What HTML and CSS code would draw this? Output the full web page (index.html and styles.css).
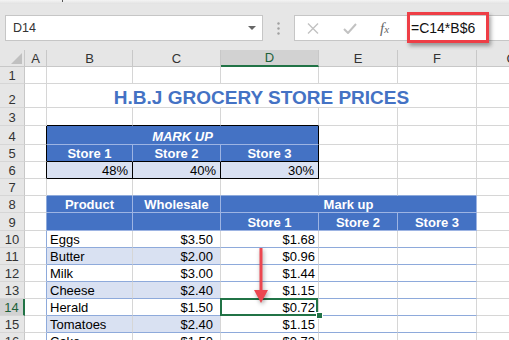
FILE: index.html
```html
<!DOCTYPE html>
<html lang="en">
<head>
  <meta charset="UTF-8">
  <title>H.B.J Grocery Store Prices</title>
  <link rel="stylesheet" href="styles.css">
</head>
<body>
  <!-- Formelleiste -->
  <div class="toolbar">
    <div class="strip"><span class="tick"></span></div>
    <div class="bar">
      <div class="namebox">
        <span>D14</span>
        <span class="caret"></span>
      </div>
      <div class="grip">
        <svg width="3" height="13" viewBox="0 0 3 13"><circle cx="1.5" cy="1.5" r="1.2"/><circle cx="1.5" cy="6.5" r="1.2"/><circle cx="1.5" cy="11.5" r="1.2"/></svg>
      </div>
      <div class="formula">
        <div class="fbtns">
          <svg class="ico-x" width="12" height="11" viewBox="0 0 12 11"><path d="M1 0.5 L11 10.5 M11 0.5 L1 10.5"/></svg>
          <svg class="ico-ok" width="14" height="11" viewBox="0 0 14 11"><path d="M1 6 L5 10 L13 1"/></svg>
          <span class="fx">f<span class="fxx">x</span></span>
        </div>
        <div class="input">
          <div class="highlight">=C14*B$6</div>
        </div>
      </div>
    </div>
  </div>

  <!-- Tabelle -->
  <div class="sheet">
    <div class="corner"><svg width="25" height="17"><polygon points="22,3 22,14 11,14"/></svg></div>
    <div class="ch">A</div><div class="ch">B</div><div class="ch">C</div><div class="ch ch-sel">D</div><div class="ch">E</div><div class="ch">F</div><div class="ch">G</div>

    <div class="rh">1</div>
    <div class="c"></div><div class="c"></div><div class="c"></div><div class="c"></div><div class="c"></div><div class="c"></div><div class="c"></div>

    <div class="rh">2</div>
    <div class="c"></div><div class="c title">H.B.J GROCERY STORE PRICES</div><div class="c"></div>

    <div class="rh">3</div>
    <div class="c"></div><div class="c top-b"></div><div class="c top-b"></div><div class="c top-b"></div><div class="c"></div><div class="c"></div><div class="c"></div>

    <div class="rh">4</div>
    <div class="c edge-b"></div><div class="c mk">MARK UP</div><div class="c"></div><div class="c"></div><div class="c"></div>

    <div class="rh">5</div>
    <div class="c edge-b"></div><div class="c mh">Store 1</div><div class="c mh">Store 2</div><div class="c mh mh-last">Store 3</div><div class="c"></div><div class="c"></div><div class="c"></div>

    <div class="rh">6</div>
    <div class="c edge-b"></div><div class="c mv">48%</div><div class="c mv">40%</div><div class="c mv">30%</div><div class="c"></div><div class="c"></div><div class="c"></div>

    <div class="rh">7</div>
    <div class="c"></div><div class="c top-t"></div><div class="c top-t"></div><div class="c top-t"></div><div class="c top-t"></div><div class="c top-t"></div><div class="c"></div>

    <div class="rh">8</div>
    <div class="c edge-t"></div><div class="c th">Product</div><div class="c th">Wholesale</div><div class="c th th-wide">Mark up</div><div class="c"></div>

    <div class="rh">9</div>
    <div class="c edge-t"></div><div class="c th"></div><div class="c th"></div><div class="c th">Store 1</div><div class="c th">Store 2</div><div class="c th">Store 3</div><div class="c"></div>

    <div class="rh">10</div>
    <div class="c edge-t"></div><div class="c td">Eggs</div><div class="c td num-c">$3.50</div><div class="c td num-d">$1.68</div><div class="c td"></div><div class="c td"></div><div class="c"></div>

    <div class="rh">11</div>
    <div class="c edge-t"></div><div class="c td alt">Butter</div><div class="c td alt num-c">$2.00</div><div class="c td num-d">$0.96</div><div class="c td"></div><div class="c td"></div><div class="c"></div>

    <div class="rh">12</div>
    <div class="c edge-t"></div><div class="c td">Milk</div><div class="c td num-c">$3.00</div><div class="c td num-d">$1.44</div><div class="c td"></div><div class="c td"></div><div class="c"></div>

    <div class="rh">13</div>
    <div class="c edge-t"></div><div class="c td alt">Cheese</div><div class="c td alt num-c">$2.40</div><div class="c td num-d">$1.15</div><div class="c td"></div><div class="c td"></div><div class="c"></div>

    <div class="rh rh-sel">14</div>
    <div class="c edge-t"></div><div class="c td">Herald</div><div class="c td num-c">$1.50</div>
    <div class="c td num-d active">$0.72<span class="cursor"></span><span class="handle"></span></div>
    <div class="c td"></div><div class="c td"></div><div class="c"></div>

    <div class="rh">15</div>
    <div class="c edge-t"></div><div class="c td alt">Tomatoes</div><div class="c td alt num-c">$2.40</div><div class="c td num-d">$1.15</div><div class="c td"></div><div class="c td"></div><div class="c"></div>

    <div class="rh">16</div>
    <div class="c edge-t"></div><div class="c td">Cake</div><div class="c td num-c">$1.50</div><div class="c td num-d">$0.72</div><div class="c td"></div><div class="c td"></div><div class="c"></div>

    <!-- Pfeil ueber der Spalte D -->
    <svg class="arrow" width="20" height="64" viewBox="0 0 20 64">
      <path d="M9 2 L9 46" />
      <polygon points="2,44 16,44 9,57" />
    </svg>
  </div>
</body>
</html>
```

FILE: styles.css
```css
body {
  margin: 0;
  width: 509px;
  height: 340px;
  overflow: hidden;
  background-color: #fff;
  font-family: "Liberation Sans", Arial, sans-serif;
}
.toolbar {
  height: 50px;
  background-color: #e6e6e6;
}
.strip {
  height: 4px;
  background: linear-gradient(#f4f4f4, #e2e2e2);
  position: relative;
}
.tick {
  position: absolute;
  left: 62px;
  top: 0;
  width: 1px;
  height: 2px;
  background-color: #555;
}
.bar {
  display: flex;
  align-items: center;
  height: 26px;
  margin-top: 11px;
  padding-left: 5px;
}
.namebox {
  width: 258px;
  height: 26px;
  box-sizing: border-box;
  background-color: #fff;
  border: 1px solid #c6c6c6;
  display: flex;
  align-items: center;
  justify-content: space-between;
  padding: 0 6px 0 7px;
  font-size: 12.5px;
  color: #333;
}
.caret {
  width: 0;
  height: 0;
  border-left: 4px solid transparent;
  border-right: 4px solid transparent;
  border-top: 4px solid #666;
}
.grip {
  width: 31px;
  display: flex;
  justify-content: center;
}
.grip svg {
  fill: #a0a0a0;
}
.formula {
  flex: 1;
  height: 26px;
  box-sizing: border-box;
  background-color: #fff;
  border: 1px solid #c6c6c6;
  border-right: none;
  display: flex;
}
.fbtns {
  width: 112px;
  display: flex;
  align-items: center;
}
.fbtns svg {
  fill: none;
  stroke: #c2c2c2;
}
.ico-x {
  margin-left: 12px;
  stroke-width: 1.4;
}
.ico-ok {
  margin-left: 24px;
  stroke-width: 2;
}
.fx {
  margin-left: 23px;
  font-family: "Liberation Serif", serif;
  font-style: italic;
  font-size: 15px;
  color: #666;
}
.fxx {
  font-size: 11px;
}
.input {
  position: relative;
  flex: 1;
}
.highlight {
  position: absolute;
  left: 0;
  top: -4px;
  width: 82px;
  height: 31px;
  box-sizing: border-box;
  border: 3px solid #ee3e46;
  box-shadow: 2px 3px 4px rgba(0, 0, 0, 0.35);
  display: flex;
  align-items: center;
  padding-left: 1px;
  font-size: 14px;
  color: #111;
}
.sheet {
  position: relative;
  display: grid;
  grid-template-columns: 25px 22px 86px 88px 98px 79px 79px 70px;
  grid-template-rows: 17px 17px 24px 18px 19px 17px 17px 17px 17px 18px 17px 17px 17px 17px 17px 17px 17px;
  font-size: 13px;
  color: #000;
}
.corner, .ch, .rh {
  background-color: #e6e6e6;
  border-right: 1px solid #c8c8c8;
  border-bottom: 1px solid #c8c8c8;
  box-sizing: border-box;
  color: #333;
}
.corner svg {
  fill: #c0c0c0;
}
.ch {
  display: flex;
  align-items: center;
  justify-content: center;
}
.ch-sel {
  background-color: #d2d2d2;
  border-bottom: 2px solid #217346;
  color: #1d6139;
}
.rh {
  display: flex;
  align-items: flex-end;
  justify-content: center;
  line-height: 15px;
  border-bottom-color: #d6d6d6;
}
.rh-sel {
  background-color: #d2d2d2;
  border-right: 2px solid #217346;
  color: #1d6139;
}
.c {
  border-right: 1px solid #d6d6d6;
  border-bottom: 1px solid #d6d6d6;
  box-sizing: border-box;
  display: flex;
  align-items: flex-end;
  padding: 0 3px;
  line-height: 15px;
  white-space: nowrap;
}
.title {
  grid-column: span 5;
  justify-content: center;
  font-size: 19px;
  line-height: 19px;
  font-weight: bold;
  color: #4472c4;
}
.top-b {
  border-bottom-color: #000;
}
.edge-b {
  border-right-color: #000;
}
.mk {
  grid-column: span 3;
  justify-content: center;
  background-color: #4472c4;
  color: #fff;
  font-weight: bold;
  font-style: italic;
  border-right-color: #000;
  border-bottom-color: #9db4e3;
}
.mh {
  justify-content: center;
  background-color: #4472c4;
  color: #fff;
  font-weight: bold;
  border-right-color: #9db4e3;
  border-bottom-color: #000;
}
.mh-last {
  border-right-color: #000;
}
.mv {
  justify-content: flex-end;
  padding-right: 4px;
  background-color: #d9e1f2;
  border-right-color: #000;
  border-bottom-color: #000;
}
.top-t {
  border-bottom-color: #8eaadb;
}
.edge-t {
  border-right-color: #8eaadb;
}
.th {
  justify-content: center;
  background-color: #4472c4;
  color: #fff;
  font-weight: bold;
  border-right-color: #9db4e3;
  border-bottom-color: #9db4e3;
}
.th-wide {
  grid-column: span 3;
}
.td {
  border-bottom-color: #8eaadb;
}
.alt {
  background-color: #d9e1f2;
}
.num-c {
  justify-content: flex-end;
  padding-right: 7px;
}
.num-d {
  justify-content: flex-end;
  padding-right: 3px;
}
.active {
  position: relative;
}
.cursor {
  position: absolute;
  left: -1px;
  top: -1px;
  right: 0;
  bottom: -1px;
  border: 2px solid #217346;
}
.handle {
  position: absolute;
  left: 95px;
  top: 13px;
  width: 5px;
  height: 5px;
  background-color: #217346;
  border: 1px solid #fff;
}
.arrow {
  position: absolute;
  left: 252px;
  top: 196px;
  filter: drop-shadow(1px 2px 2px rgba(0, 0, 0, 0.35));
}
.arrow path {
  stroke: #ec4750;
  stroke-width: 3;
}
.arrow polygon {
  fill: #ec4750;
}
```
